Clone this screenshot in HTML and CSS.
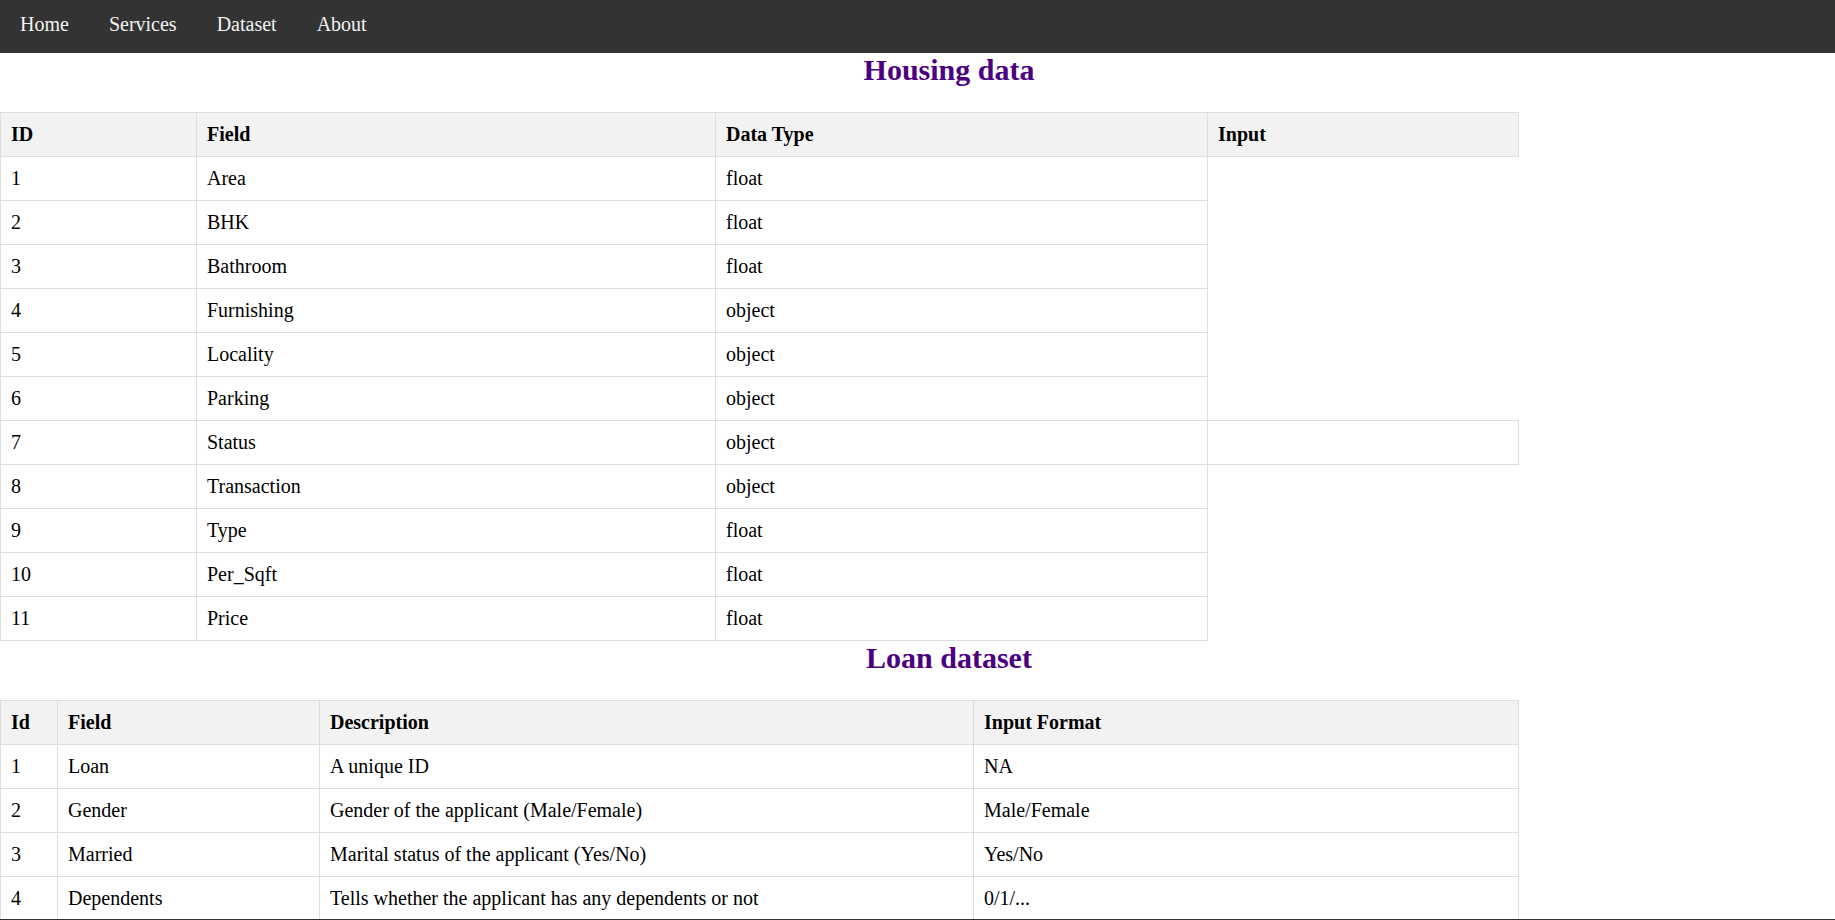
FILE: index.html
```html
<!DOCTYPE html>
<html lang="en">
<head>
<meta charset="utf-8">
<title>Dataset</title>
<link rel="stylesheet" href="styles.css">
</head>
<body>
<nav class="topnav">
  <a href="#">Home</a>
  <a href="#">Services</a>
  <a href="#">Dataset</a>
  <a href="#">About</a>
</nav>

<h2 class="title">Housing data</h2>
<table class="data housing">
  <colgroup>
    <col class="h-id"><col class="h-field"><col class="h-type"><col class="h-input">
  </colgroup>
  <tr><th>ID</th><th>Field</th><th>Data Type</th><th>Input</th></tr>
  <tr><td>1</td><td>Area</td><td>float</td></tr>
  <tr><td>2</td><td>BHK</td><td>float</td></tr>
  <tr><td>3</td><td>Bathroom</td><td>float</td></tr>
  <tr><td>4</td><td>Furnishing</td><td>object</td></tr>
  <tr><td>5</td><td>Locality</td><td>object</td></tr>
  <tr><td>6</td><td>Parking</td><td>object</td></tr>
  <tr><td>7</td><td>Status</td><td>object</td><td></td></tr>
  <tr><td>8</td><td>Transaction</td><td>object</td></tr>
  <tr><td>9</td><td>Type</td><td>float</td></tr>
  <tr><td>10</td><td>Per_Sqft</td><td>float</td></tr>
  <tr><td>11</td><td>Price</td><td>float</td></tr>
</table>

<h2 class="title">Loan dataset</h2>
<table class="data loan">
  <colgroup>
    <col class="l-id"><col class="l-field"><col class="l-desc"><col class="l-format">
  </colgroup>
  <tr><th>Id</th><th>Field</th><th>Description</th><th>Input Format</th></tr>
  <tr><td>1</td><td>Loan</td><td>A unique ID</td><td>NA</td></tr>
  <tr><td>2</td><td>Gender</td><td>Gender of the applicant (Male/Female)</td><td>Male/Female</td></tr>
  <tr><td>3</td><td>Married</td><td>Marital status of the applicant (Yes/No)</td><td>Yes/No</td></tr>
  <tr><td>4</td><td>Dependents</td><td>Tells whether the applicant has any dependents or not</td><td>0/1/...</td></tr>
</table>

<div class="bottom-edge"></div>
</body>
</html>
```

FILE: styles.css
```css
html, body {
  margin: 0;
  padding: 0;
}

body {
  font-family: "Liberation Serif", "Times New Roman", serif;
  font-size: 20px;
  color: #000;
  background: #fff;
}

.topnav {
  display: flex;
  background: #333;
  height: 53px;
  align-items: flex-start;
}

.topnav a {
  color: #f2f2f2;
  text-decoration: none;
  padding: 13px 20px 0;
  line-height: 23px;
}

.title {
  color: #4b0082;
  font-size: 30px;
  font-weight: bold;
  text-align: center;
  margin: 0 0 0.83em;
  padding-left: 63px;
}

.data {
  border-collapse: collapse;
  table-layout: fixed;
  width: 1518px;
}

.data th,
.data td {
  border: 1px solid #ddd;
  padding: 10px;
  text-align: left;
  line-height: 23px;
}

.data th {
  background: #f2f2f2;
  font-weight: bold;
}

.h-id { width: 196px; }
.h-field { width: 519px; }
.h-type { width: 492px; }
.h-input { width: 311px; }

.l-id { width: 57px; }
.l-field { width: 262px; }
.l-desc { width: 654px; }
.l-format { width: 545px; }

.bottom-edge {
  position: fixed;
  left: 0;
  right: 0;
  bottom: 0;
  height: 1px;
  background: #333;
}
```
